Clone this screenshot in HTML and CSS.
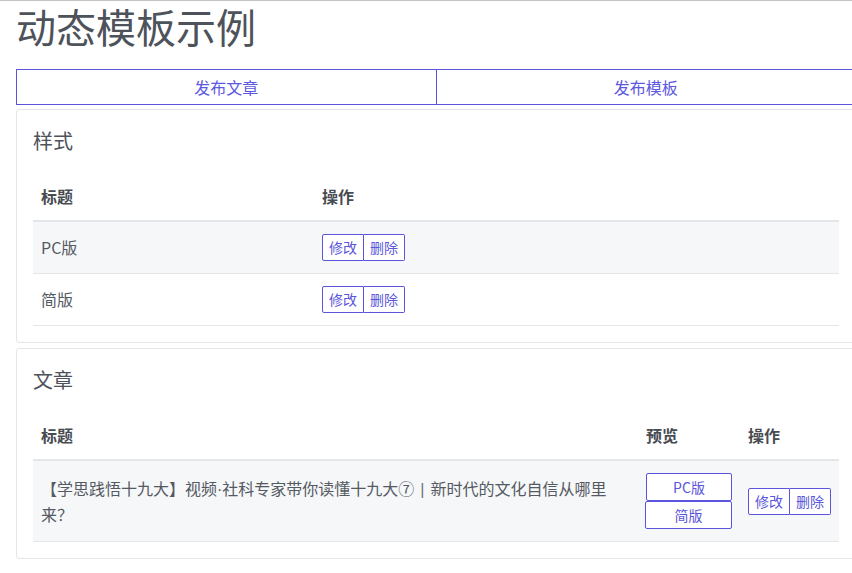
FILE: index.html
```html
<!DOCTYPE html>
<html lang="zh-CN">
<head>
<meta charset="utf-8">
<title>动态模板示例</title>
<link rel="stylesheet" href="styles.css">
</head>
<body>
<div class="topline"></div>
<div class="page">
  <h1 class="title">动态模板示例</h1>
  <div class="tabs">
    <a class="tab">发布文章</a>
    <a class="tab">发布模板</a>
  </div>

  <section class="card">
    <h2 class="card-title">样式</h2>
    <table class="table">
      <colgroup><col class="c-style-title"><col></colgroup>
      <thead>
        <tr><th>标题</th><th>操作</th></tr>
      </thead>
      <tbody>
        <tr class="striped">
          <td>PC版</td>
          <td><div class="btn-group"><button class="btn">修改</button><button class="btn">删除</button></div></td>
        </tr>
        <tr>
          <td>简版</td>
          <td><div class="btn-group"><button class="btn">修改</button><button class="btn">删除</button></div></td>
        </tr>
      </tbody>
    </table>
  </section>

  <section class="card">
    <h2 class="card-title">文章</h2>
    <table class="table">
      <colgroup><col><col class="c-preview"><col class="c-ops"></colgroup>
      <thead>
        <tr><th>标题</th><th>预览</th><th>操作</th></tr>
      </thead>
      <tbody>
        <tr class="striped">
          <td class="article">【学思践悟十九大】视频<span class="latin">·</span>社科专家带你读懂十九大⑦<span class="sep">|</span>新时代的文化自信从哪里来？</td>
          <td><button class="btn btn-block">PC版</button><button class="btn btn-block btn-second">简版</button></td>
          <td><div class="btn-group"><button class="btn">修改</button><button class="btn">删除</button></div></td>
        </tr>
      </tbody>
    </table>
  </section>
</div>
</body>
</html>
```

FILE: styles.css
```css
html {
  overflow: hidden;
}
body {
  margin: 0;
  font-family: "Noto Sans CJK SC", "Noto Sans", sans-serif;
  color: #555a62;
  background: #fff;
}
.topline {
  height: 1px;
  background: #c4c4c4;
}
.page {
  width: 840px;
  margin-left: 16px;
}
.title {
  margin: 0 0 18px;
  font-size: 40px;
  line-height: 50px;
  font-weight: 400;
  color: #4d525b;
}
.tabs {
  display: flex;
  border: 1px solid #5a55dc;
  margin-bottom: 4px;
}
.tab {
  flex: 1;
  text-align: center;
  font-size: 16px;
  line-height: 34px;
  color: #5c58e0;
}
.tab + .tab {
  border-left: 1px solid #5a55dc;
}
.card {
  border: 1px solid #e6e6e6;
  border-radius: 3px;
  padding: 16px;
  margin-bottom: 5px;
}
.card-title {
  margin: 0 0 16px;
  font-size: 20px;
  line-height: 30px;
  font-weight: 400;
  color: #4d525b;
}
.table {
  width: 100%;
  border-collapse: collapse;
  table-layout: fixed;
}
.c-style-title { width: 281px; }
.c-preview { width: 102px; }
.c-ops { width: 99px; }
.table th {
  text-align: left;
  font-size: 16px;
  line-height: 24px;
  font-weight: 700;
  color: #474b52;
  padding: 12px 8px;
  border-bottom: 2px solid #e4e6ea;
}
.table td {
  font-size: 16px;
  line-height: 25px;
  color: #555a62;
  padding: 12px 8px;
  border-bottom: 1px solid #e6e6e8;
  vertical-align: middle;
}
.table tr.striped td {
  background: #f6f7f9;
}
.latin {
  font-family: "Liberation Sans", sans-serif;
}
.sep {
  font-family: "Liberation Sans", sans-serif;
  padding: 0 6px;
  color: #6b6f76;
}
.btn-group {
  display: flex;
}
.btn {
  font-family: inherit;
  font-size: 14px;
  line-height: 25px;
  padding: 0 6px;
  color: #5a56da;
  background: #fff;
  border: 1px solid #5a55dc;
  border-radius: 2px;
  margin: 0;
  cursor: pointer;
}
.btn-group .btn:first-child {
  border-top-right-radius: 0;
  border-bottom-right-radius: 0;
}
.btn-group .btn + .btn {
  border-left: 0;
  border-top-left-radius: 0;
  border-bottom-left-radius: 0;
}
.btn-block {
  display: block;
  width: 86px;
  line-height: 26px;
  padding: 0;
}
.btn-second {
  width: 87px;
  margin-left: -1px;
}
```
